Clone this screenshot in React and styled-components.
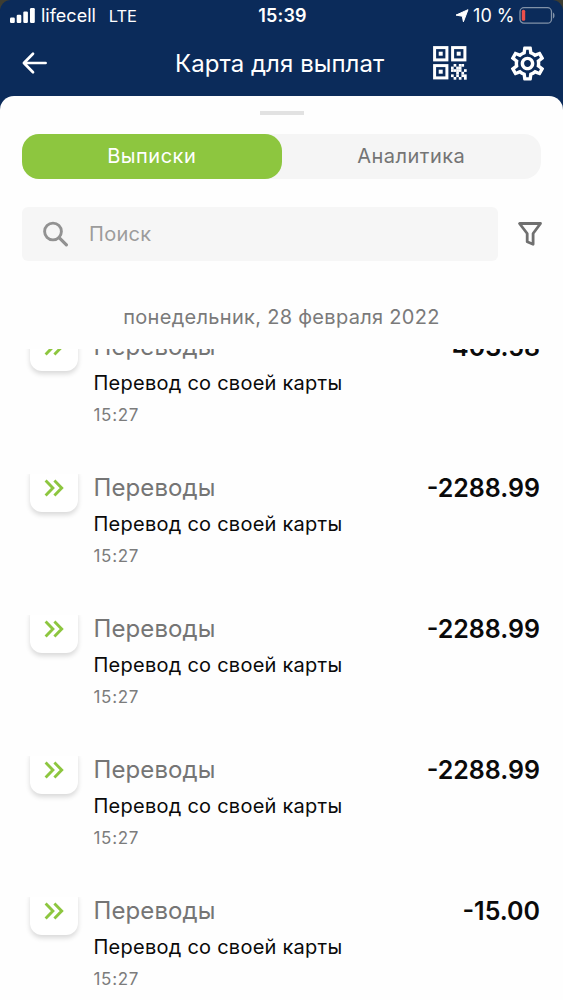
import React from 'react';
import styled, { createGlobalStyle } from 'styled-components';
import { MdOutlineSettings } from 'react-icons/md';

const GlobalStyle = createGlobalStyle`
  * { box-sizing: border-box; }
  body {
    margin: 0;
    background: #3d3d32;
    font-family: Inter, 'Liberation Sans', sans-serif;
  }
`;

const Screen = styled.div`
  width: 563px;
  height: 1000px;
  overflow: hidden;
  display: flex;
  flex-direction: column;
  border-radius: 11px 11px 0 0;
  background: #0b2b5a;
`;

const Label = styled.span`
  white-space: nowrap;
  font-size: ${(p) => p.$size}px;
  line-height: ${(p) => p.$line || 30}px;
  font-weight: ${(p) => p.$weight || 400};
  letter-spacing: ${(p) => p.$track || 0}px;
  color: ${(p) => p.$color || '#fff'};
`;

const NavTitle = styled(Label)`
  padding-top: 2px;
`;

const StatusBar = styled.div`
  height: 32px;
  flex: none;
  display: grid;
  grid-template-columns: 1fr auto 1fr;
  align-items: center;
  padding: 0 8px 0 10px;
`;

const StatusGroup = styled.div`
  display: flex;
  align-items: center;
  gap: ${(p) => p.$gap}px;
  justify-content: ${(p) => (p.$end ? 'flex-end' : 'flex-start')};
  svg { display: block; flex: none; }
`;

const Network = styled(Label)`
  margin-left: 7px;
`;

const NavBar = styled.header`
  height: 64px;
  flex: none;
  display: grid;
  grid-template-columns: 153px 1fr auto;
  align-items: center;
  padding: 0 15px 2px 22px;
  svg { display: block; }
`;

const NavActions = styled.div`
  display: flex;
  justify-content: flex-end;
  align-items: center;
  gap: 40px;
`;

const Sheet = styled.main`
  flex: 1;
  min-height: 0;
  display: flex;
  flex-direction: column;
  background: #fefefe;
  border-radius: 14px 14px 0 0;
`;

const Handle = styled.div`
  width: 44px;
  height: 4px;
  margin: 15px auto 0;
  flex: none;
  background: #e2e2e2;
`;

const Tabs = styled.div`
  display: flex;
  flex: none;
  height: 45px;
  margin: 18.5px 22px 0;
  border-radius: 17px;
  background: #f5f5f5;
`;

const Tab = styled.div`
  flex: 1;
  display: flex;
  align-items: center;
  justify-content: center;
  border-radius: 17px;
  background: ${(p) => (p.$active ? '#8dc63f' : 'transparent')};
`;

const SearchRow = styled.div`
  display: flex;
  align-items: center;
  flex: none;
  margin: 28.5px 20px 0 22px;
  gap: 19px;
  svg { display: block; flex: none; }
`;

const SearchField = styled.div`
  flex: 1;
  height: 54px;
  display: flex;
  align-items: center;
  gap: 21px;
  padding-left: 20px;
  border-radius: 6px;
  background: #f6f6f6;
`;

const DateHeading = styled.div`
  flex: none;
  height: 88px;
  padding-top: 41px;
  text-align: center;
`;

const List = styled.div`
  flex: 1;
  min-height: 0;
  overflow: hidden;
`;

const Entry = styled.div`
  height: 141px;
  display: flex;
  align-items: flex-start;
  padding: 0 23px 0 22px;
  margin-top: ${(p) => (p.$first ? '-17px' : '0')};
`;

const TileClip = styled.div`
  width: 64px;
  height: 56px;
  flex: none;
  margin-top: 1px;
  overflow: hidden;
  display: flex;
  align-items: flex-start;
  justify-content: center;
`;

const Tile = styled.div`
  width: 48px;
  height: 48px;
  margin-top: -10px;
  display: flex;
  align-items: center;
  justify-content: center;
  border-radius: 12px;
  background: #fff;
  box-shadow: 0 3px 5px rgba(0, 0, 0, 0.15);
  svg { display: block; }
`;

const Details = styled.div`
  flex: 1;
  margin-left: 7.5px;
  display: flex;
  flex-direction: column;
`;

const Top = styled.div`
  display: flex;
  justify-content: space-between;
  height: 36px;
`;

const Line = styled.div`
  height: ${(p) => p.$height}px;
`;

const SignalIcon = () => (
  <svg width="25" height="16" viewBox="0 0 25 16" fill="#fff">
    <rect x="0" y="9.5" width="4.8" height="5.5" rx="1.2" />
    <rect x="6.7" y="6.8" width="4.6" height="8.2" rx="1.2" />
    <rect x="13.3" y="3.5" width="4.6" height="11.5" rx="1.2" />
    <rect x="20" y="0" width="4.8" height="15" rx="1.2" />
  </svg>
);

const LocationIcon = () => (
  <svg width="14" height="14" viewBox="0 0 14 14">
    <path d="M13 .7 8.4 12.8 7.3 7.2 1 6.1Z" fill="#fff" stroke="#fff" strokeWidth="1" strokeLinejoin="round" />
  </svg>
);

const BatteryIcon = () => (
  <svg width="36" height="18" viewBox="0 0 36 18">
    <rect x="1" y=".7" width="31.5" height="15.5" rx="4" fill="none" stroke="#8192a8" strokeWidth="1.3" />
    <rect x="2.8" y="2.7" width="3.4" height="11" rx="1.5" fill="#ee4f4b" />
    <path d="M34 5.5v6c2-.8 2-5.2 0-6Z" fill="#8192a8" />
  </svg>
);

const BackIcon = () => (
  <svg width="26" height="24" viewBox="0 0 26 24" fill="none" stroke="#fff" strokeWidth="2.7" strokeLinecap="round" strokeLinejoin="round">
    <path d="M23.6 12H2M11 2.8 1.900 12 11 21.2" />
  </svg>
);

const QR_ROWS = [
  '.#.##.',
  '#.##..',
  '####.#',
  '..#.#.',
  '#.#.##',
  '.#.#.#',
];

const QrIcon = () => (
  <svg width="34" height="34" viewBox="0 0 34 34">
    {[[0, 0], [18, 0], [0, 18]].map(([x, y]) => (
      <g key={`${x}-${y}`}>
        <rect x={x + 1.6} y={y + 1.6} width="12.3" height="12.3" fill="none" stroke="#fff" strokeWidth="3" />
        <rect x={x + 5.7} y={y + 5.7} width="4" height="4" fill="#fff" />
      </g>
    ))}
    {QR_ROWS.map((row, r) => row.split('').map((cell, c) => cell === '#' && (
      <rect key={`${c}-${r}`} x={18 + c * 2.6} y={18 + r * 2.6} width="2.7" height="2.7" fill="#fff" />
    )))}
  </svg>
);

const SearchIcon = () => (
  <svg width="26" height="26" viewBox="0 0 26 26" fill="none" stroke="#929292" strokeWidth="2.9">
    <circle cx="11" cy="10.5" r="8.4" />
    <path d="m17.1 16.6 7.3 7.3" strokeWidth="3.2" strokeLinecap="round" />
  </svg>
);

const FilterIcon = () => (
  <svg width="26" height="26" viewBox="0 0 26 26" fill="none" stroke="#707070" strokeWidth="2.8" strokeLinejoin="round">
    <path d="M2.5 2.5H23.5L16.1 12.5V23.3L10.2 20.8V12.5Z" />
  </svg>
);

const TransferIcon = () => (
  <svg width="20" height="18" viewBox="0 0 20 18" fill="none" stroke="#8dc63f" strokeWidth="2.9">
    <path d="M1.6 1.6 8.9 9 1.6 16.4M10.4 1.6 17.7 9 10.4 16.4" />
  </svg>
);

const ENTRIES = ['-403.58', '-2288.99', '-2288.99', '-2288.99', '-15.00'];

export default function App() {
  return (
    <>
      <GlobalStyle />
      <Screen>
        <StatusBar>
          <StatusGroup $gap={6}>
            <SignalIcon />
            <Label $size={18}>lifecell</Label>
            <Network $size={16.5} $track={-0.1}>LTE</Network>
          </StatusGroup>
          <Label $size={18} $weight={600} $track={0.2}>15:39</Label>
          <StatusGroup $end $gap={4.5}>
            <LocationIcon />
            <Label $size={18}>10 %</Label>
            <BatteryIcon />
          </StatusGroup>
        </StatusBar>
        <NavBar>
          <BackIcon />
          <NavTitle $size={24} $track={0.05}>Карта для выплат</NavTitle>
          <NavActions>
            <QrIcon />
            <MdOutlineSettings size={41} color="#fff" />
          </NavActions>
        </NavBar>
        <Sheet>
          <Handle />
          <Tabs>
            <Tab $active><Label $size={20} $track={0.5}>Выписки</Label></Tab>
            <Tab><Label $size={20} $track={0.5} $color="#747474">Аналитика</Label></Tab>
          </Tabs>
          <SearchRow>
            <SearchField>
              <SearchIcon />
              <Label $size={20} $track={0.3} $color="#9c9c9c">Поиск</Label>
            </SearchField>
            <FilterIcon />
          </SearchRow>
          <DateHeading>
            <Label $size={20} $track={0.3} $color="#7a7a7a">понедельник, 28 февраля 2022</Label>
          </DateHeading>
          <List>
            {ENTRIES.map((amount, i) => (
              <Entry key={i} $first={i === 0}>
                <TileClip>
                  <Tile><TransferIcon /></Tile>
                </TileClip>
                <Details>
                  <Top>
                    <Label $size={24} $track={0.1} $color="#757575">Переводы</Label>
                    <Label $size={25} $weight={600} $color="#0a0a0a">{amount}</Label>
                  </Top>
                  <Line $height={32}><Label $size={20} $track={0.25} $color="#0a0a0a">Перевод со своей карты</Label></Line>
                  <Line $height={30}><Label $size={17} $track={0.7} $color="#7c7c7c">15:27</Label></Line>
                </Details>
              </Entry>
            ))}
          </List>
        </Sheet>
      </Screen>
    </>
  );
}
